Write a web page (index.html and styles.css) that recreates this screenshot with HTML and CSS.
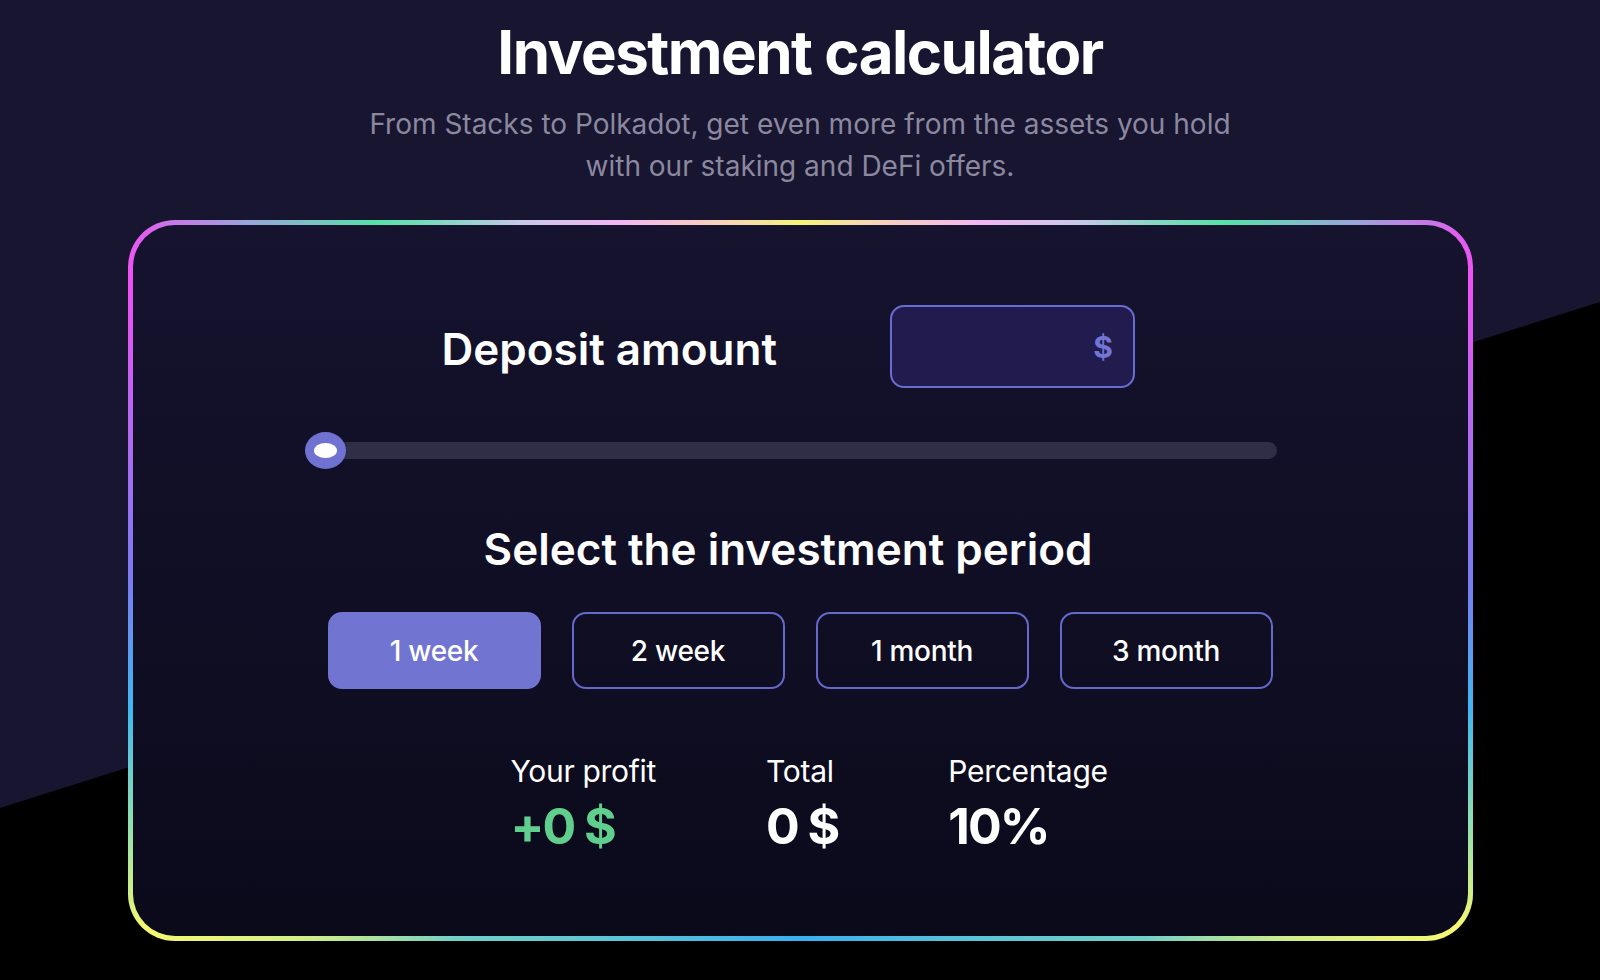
FILE: index.html
```html
<!DOCTYPE html>
<html lang="en">
<head>
<meta charset="utf-8">
<title>Investment calculator</title>
<link rel="stylesheet" href="styles.css">
</head>
<body>
<div class="page">
  <h1 class="title">Investment calculator</h1>
  <p class="subtitle">From Stacks to Polkadot, get even more from the assets you hold<br>with our staking and DeFi offers.</p>
  <div class="frame">
    <div class="card">
      <div class="deposit">
        <div class="deposit-label">Deposit amount</div>
        <div class="amount"><span class="currency">$</span></div>
      </div>
      <div class="slider">
        <div class="track"></div>
        <div class="thumb"></div>
      </div>
      <h2 class="period-title">Select the investment period</h2>
      <div class="periods">
        <button class="period active">1 week</button>
        <button class="period">2 week</button>
        <button class="period">1 month</button>
        <button class="period">3 month</button>
      </div>
      <div class="stats">
        <div class="stat">
          <div class="stat-label">Your profit</div>
          <div class="stat-value profit">+0 $</div>
        </div>
        <div class="stat">
          <div class="stat-label">Total</div>
          <div class="stat-value">0 $</div>
        </div>
        <div class="stat">
          <div class="stat-label">Percentage</div>
          <div class="stat-value">10%</div>
        </div>
      </div>
    </div>
  </div>
</div>
</body>
</html>
```
FILE: styles.css
```css
html, body {
  margin: 0;
  padding: 0;
}
body {
  width: 1600px;
  height: 980px;
  overflow: hidden;
  position: relative;
  background: #171530;
  font-family: Inter, "Noto Sans", sans-serif;
  color: #ffffff;
}
body::before {
  content: "";
  position: absolute;
  inset: 0;
  background: #000000;
  clip-path: polygon(0 808px, 1600px 302px, 1600px 980px, 0 980px);
}
.page {
  position: relative;
  display: flex;
  flex-direction: column;
  align-items: center;
}
.title {
  margin: 16px 0 0;
  font-size: 60px;
  line-height: 72px;
  font-weight: 700;
  letter-spacing: -0.025em;
}
.subtitle {
  margin: 15px 0 0;
  font-size: 28px;
  line-height: 42px;
  font-weight: 400;
  color: #8b889f;
  text-align: center;
  letter-spacing: 0;
}
.frame {
  margin-top: 33px;
  width: 1345px;
  height: 721px;
  box-sizing: border-box;
  padding: 5px;
  border-radius: 47px;
  background: conic-gradient(from 0deg at 50% 50%,
    #f5f578 0deg,
    #f8d8b0 10deg,
    #f3b6f3 27deg,
    #c8c8e8 38deg,
    #55e2a8 50deg,
    #98a8d8 57deg,
    #e060f0 62deg,
    #f050f4 66deg,
    #b868f0 76deg,
    #7a7cf0 90deg,
    #40b8f0 101deg,
    #90e0b0 110deg,
    #f8f870 118deg,
    #d0ee88 126deg,
    #70d0c8 136deg,
    #38b0f0 180deg,
    #70d0c8 224deg,
    #d0ee88 234deg,
    #f8f870 242deg,
    #90e0b0 250deg,
    #40b8f0 259deg,
    #7a7cf0 270deg,
    #b868f0 284deg,
    #f050f4 294deg,
    #e060f0 298deg,
    #98a8d8 303deg,
    #55e2a8 310deg,
    #c8c8e8 322deg,
    #f3b6f3 333deg,
    #f8d8b0 350deg,
    #f5f578 360deg);
}
.card {
  height: 100%;
  border-radius: 42px;
  background: linear-gradient(180deg, #15132e 0%, #0b0a1b 100%);
  display: flex;
  flex-direction: column;
}
.deposit {
  display: flex;
  align-items: center;
  gap: 113px;
  padding-left: 309px;
  margin-top: 80px;
}
.deposit-label {
  font-size: 44px;
  font-weight: 600;
  letter-spacing: 0;
  margin-top: 5px;
}
.amount {
  width: 245px;
  height: 83px;
  box-sizing: border-box;
  border: 2.5px solid #6a6cd2;
  border-radius: 14px;
  background: #221c4e;
  display: flex;
  align-items: center;
  justify-content: flex-end;
  padding-right: 20px;
}
.currency {
  font-size: 30px;
  font-weight: 700;
  color: #7275d3;
}
.slider {
  position: relative;
  margin: 44px 0 0 174px;
  width: 970px;
  height: 37px;
  display: flex;
  align-items: center;
}
.track {
  width: 100%;
  height: 17px;
  border-radius: 9px;
  background: #302d46;
}
.thumb {
  position: absolute;
  left: -2px;
  top: 0;
  width: 41px;
  height: 37px;
  border-radius: 50%;
  background: #7072d2;
  display: flex;
  align-items: center;
  justify-content: center;
}
.thumb::after {
  content: "";
  width: 23px;
  height: 15px;
  border-radius: 50%;
  background: #ffffff;
}
.period-title {
  margin: 54px 0 0;
  padding-right: 24px;
  text-align: center;
  font-size: 44px;
  line-height: 53px;
  font-weight: 600;
  letter-spacing: 0;
}
.periods {
  display: flex;
  justify-content: center;
  gap: 31px;
  margin-top: 36px;
}
.period {
  width: 213px;
  height: 77px;
  box-sizing: border-box;
  border: 2px solid #6668cc;
  border-radius: 14px;
  background: transparent;
  color: #ffffff;
  font-family: Inter, "Noto Sans", sans-serif;
  font-size: 28px;
  font-weight: 500;
  letter-spacing: -0.01em;
  padding: 0;
}
.period.active {
  background: #7174d0;
  border-color: #7174d0;
}
.stats {
  display: flex;
  gap: 110px;
  padding-left: 378px;
  margin-top: 64px;
}
.stat-label {
  font-size: 30px;
  line-height: 36px;
  font-weight: 400;
  letter-spacing: -0.01em;
}
.stat-value {
  margin-top: 7px;
  font-size: 50px;
  line-height: 60px;
  font-weight: 700;
  letter-spacing: -0.04em;
}
.stat-value.profit {
  color: #60cf8e;
}
```
